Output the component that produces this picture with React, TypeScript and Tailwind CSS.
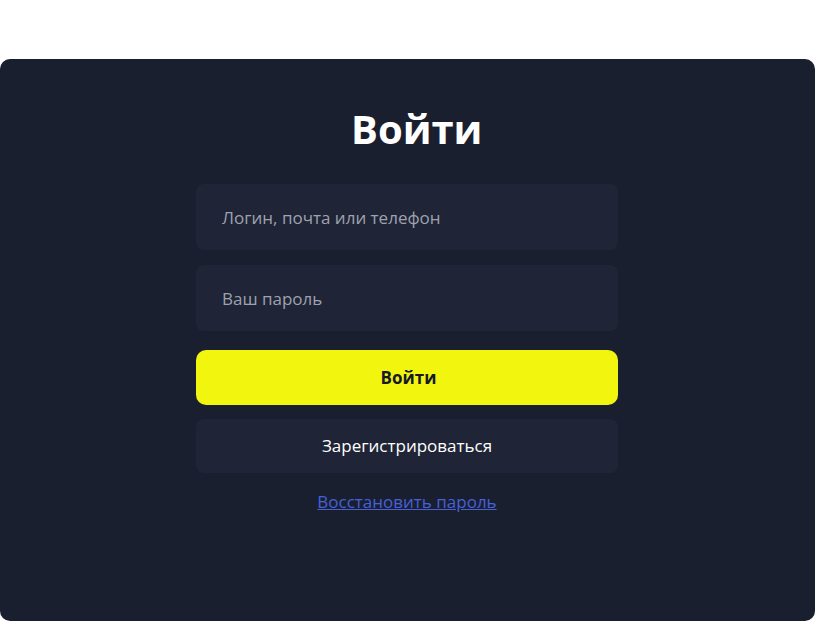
export default function App() {
  return (
    <div className="min-h-[621px] bg-white pt-[59px] font-['Open_Sans',sans-serif]">
      <div className="h-[562px] rounded-[10px] bg-[#1a1f2f] pl-[196px] pt-[43px]">
        <form className="flex w-[422px] flex-col" onSubmit={(e) => e.preventDefault()}>
          <h1 className="ml-[155px] text-[40px] font-bold leading-[54px] text-white">Войти</h1>
          <input
            type="text"
            placeholder="Логин, почта или телефон"
            className="mt-[28px] h-[66px] rounded-lg bg-[#202437] px-[26px] text-[17px] text-white outline-none placeholder:text-[#9ea2ad]"
          />
          <input
            type="password"
            placeholder="Ваш пароль"
            className="mt-[15px] h-[66px] rounded-lg bg-[#202437] px-[26px] text-[17px] text-white outline-none placeholder:text-[#9ea2ad]"
          />
          <button
            type="submit"
            className="mt-[19px] h-[55px] rounded-[10px] bg-[#f2f60f] pl-[3px] text-[17px] font-bold text-[#16192a]"
          >
            Войти
          </button>
          <button type="button" className="mt-[14px] h-[54px] rounded-lg bg-[#202437] text-[17px] text-white">
            Зарегистрироваться
          </button>
          <a href="#" className="mt-[16px] self-center text-[17px] text-[#4560d8] underline">
            Восстановить пароль
          </a>
        </form>
      </div>
    </div>
  );
}
